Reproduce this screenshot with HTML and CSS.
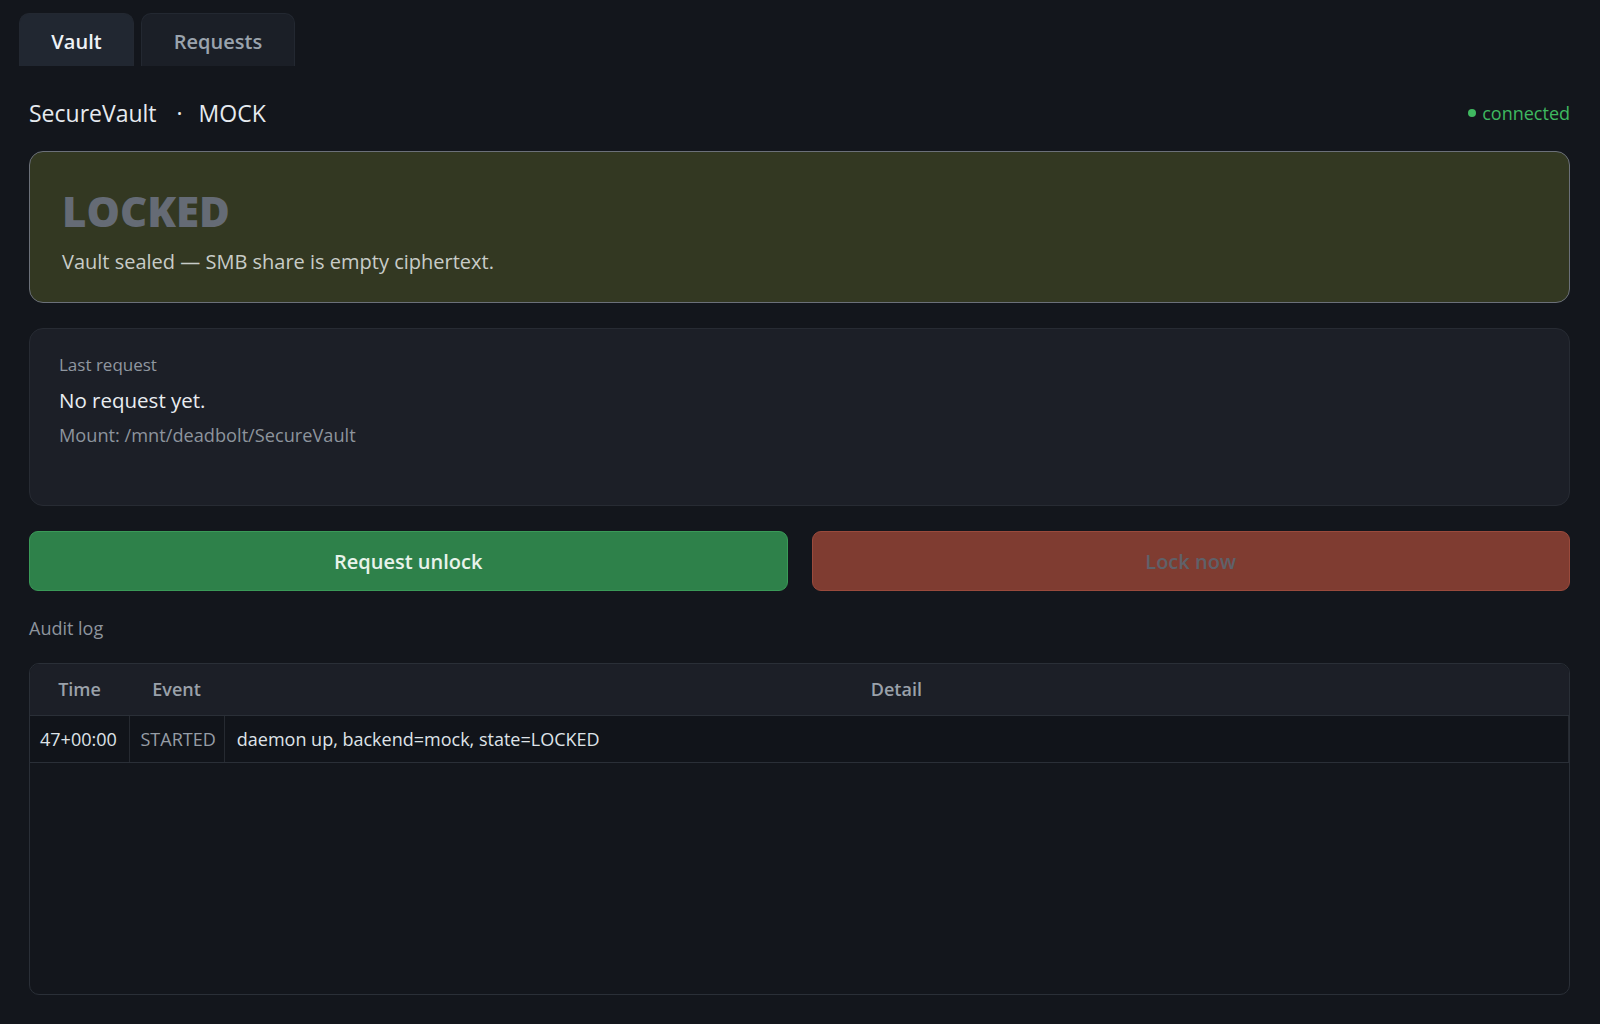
FILE: index.html
```html
<!DOCTYPE html>
<html>
<head>
<meta charset="utf-8">
<link rel="stylesheet" href="styles.css">
</head>
<body>
<nav class="tabs">
  <div class="tab active">Vault</div>
  <div class="tab">Requests</div>
</nav>
<main class="page">
  <header class="head">
    <h1 class="title">SecureVault <span class="sep">·</span> MOCK</h1>
    <div class="conn"><span class="dot"></span>connected</div>
  </header>
  <section class="state">
    <div class="state-title">LOCKED</div>
    <div class="state-sub">Vault sealed — SMB share is empty ciphertext.</div>
  </section>
  <section class="card">
    <div class="label">Last request</div>
    <div class="req">No request yet.</div>
    <div class="mount">Mount: /mnt/deadbolt/SecureVault</div>
  </section>
  <div class="actions">
    <button class="btn unlock">Request unlock</button>
    <button class="btn lock" disabled>Lock now</button>
  </div>
  <div class="audit-label">Audit log</div>
  <div class="table-wrap">
    <table class="log">
      <thead>
        <tr><th class="c-time">Time</th><th class="c-event">Event</th><th>Detail</th></tr>
      </thead>
      <tbody>
        <tr><td class="c-time">47+00:00</td><td class="c-event ev">STARTED</td><td>daemon up, backend=mock, state=LOCKED</td></tr>
      </tbody>
    </table>
  </div>
</main>
</body>
</html>
```
FILE: styles.css
```css
* { box-sizing: border-box; }
html, body { margin: 0; padding: 0; }
body {
  background: #13161c;
  color: #e6edf3;
  font-family: "Open Sans", "Noto Sans", sans-serif;
  width: 1600px;
  height: 1024px;
  overflow: hidden;
}
.tabs {
  display: flex;
  gap: 7px;
  padding: 13px 0 0 19px;
  height: 66px;
}
.tab {
  height: 53px;
  padding: 2px 20px 0;
  display: flex;
  align-items: center;
  justify-content: center;
  border-radius: 10px 10px 0 0;
  background: #1b1f27;
  border: 1px solid #232831;
  border-bottom: none;
  color: #9aa3ad;
  font-size: 20px;
  font-weight: 600;
  width: 154px;
}
.tab.active {
  width: 115px;
  background: #212731;
  color: #eef2f6;
}
.page {
  padding: 0 30px 0 29px;
}
.head {
  display: flex;
  justify-content: space-between;
  align-items: center;
  height: 85px;
  padding-top: 8px;
}
.title {
  margin: 0;
  font-size: 23px;
  font-weight: 500;
  color: #e6eaef;
}
.sep { margin: 0 10px 0 14px; }
.conn {
  color: #3fb960;
  font-size: 18px;
  display: flex;
  align-items: center;
}
.dot {
  width: 8px; height: 8px; border-radius: 50%;
  background: #3fb960;
  margin-right: 6px;
}
.state {
  height: 152px;
  background: #333822;
  border: 1px solid #6b7079;
  border-radius: 14px;
  padding: 30px 32px;
}
.state-title {
  font-size: 42px;
  font-weight: 800;
  color: #656b75;
  line-height: 58px;
}
.state-sub {
  font-size: 20px;
  color: #c8ccc8;
  margin-top: 8px;
}
.card {
  margin-top: 25px;
  height: 178px;
  background: #1c1f27;
  border: 1px solid #272b33;
  border-radius: 14px;
  padding: 24px 29px;
}
.label { font-size: 17px; color: #9097a0; line-height: 24px; }
.req { font-size: 20.5px; color: #e9edf1; margin-top: 8px; line-height: 30px; }
.mount { font-size: 18.2px; color: #8d949d; margin-top: 7px; line-height: 26px; }
.actions {
  display: flex;
  gap: 24px;
  margin-top: 25px;
}
.btn {
  flex: 1;
  height: 60px;
  border-radius: 9px;
  font-family: inherit;
  font-size: 20px;
  font-weight: 600;
}
.unlock {
  background: #2e814a;
  border: 1px solid #3a9a58;
  color: #e8f3ea;
}
.lock {
  background: #7f3c31;
  border: 1px solid #9a4a3c;
  color: #5f6169;
}
.audit-label {
  margin-top: 24px;
  font-size: 18px;
  color: #8d949d;
  line-height: 26px;
}
.table-wrap {
  margin-top: 22px;
  height: 332px;
  border: 1px solid #2a2f37;
  border-radius: 10px;
  overflow: hidden;
}
.log {
  width: 100%;
  border-collapse: collapse;
  font-size: 18px;
}
.log th {
  background: #1c1f27;
  color: #9aa1aa;
  font-weight: 600;
  height: 51px;
  border-bottom: 1px solid #2a2f37;
}
.log td {
  background: #11141a;
  color: #dfe3e8;
  height: 47px;
  padding: 0 10px 0 12px;
  border-bottom: 1px solid #2a2f37;
  border-right: 1px solid #262a31;
  white-space: nowrap;
}
.log .c-time { width: 99px; }
.log .c-event { width: 95px; }
.log td.c-time { padding: 0 8px 0 10px; }
.log td.ev { color: #969da6; font-weight: 400; padding: 0 8px 0 11px; }
```
